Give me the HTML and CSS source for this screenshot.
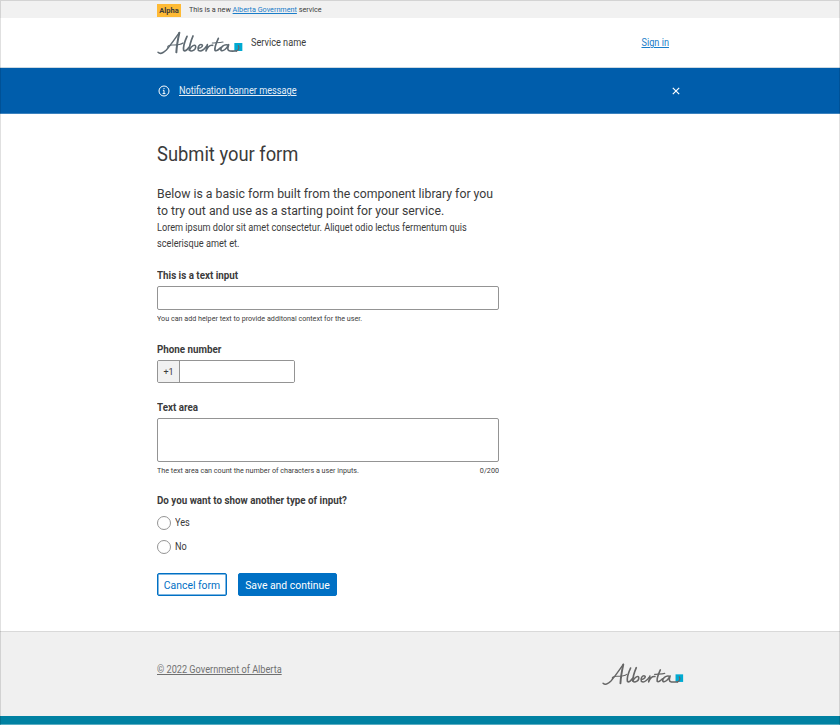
FILE: index.html
```html
<!DOCTYPE html>
<html lang="en">
<head>
<meta charset="utf-8">
<title>Submit your form</title>
<link rel="stylesheet" href="styles.css">
</head>
<body>
<svg class="defs" aria-hidden="true">
  <symbol id="alberta" viewBox="20 18 260 78">
    <rect x="252" y="57" width="24" height="24" fill="#00aad2"/>
    <g fill="none" stroke="currentColor" stroke-linecap="round" stroke-linejoin="round">
      <path stroke-width="4.4" d="M23 85C29 91 39 87 48 78C63 61 75 42 87 26"/>
      <path stroke-width="6" d="M87 26C83 44 79 64 78 85"/>
      <path stroke-width="3.6" d="M53 71C50 66 57 63 66 63C76 63 88 64 98 57"/>
      <path stroke-width="5.2" d="M110 37C104 50 98 68 100 79C104 84 111 77 116 70"/>
      <path stroke-width="5.2" d="M128 36C122 50 117 66 117 78"/>
      <path stroke-width="4.6" d="M117 78C123 85 137 78 136 67C134 60 123 66 119 75"/>
      <path stroke-width="4.6" d="M145 73C154 72 160 64 154 62C147 60 140 71 144 79C151 84 161 77 169 66"/>
      <path stroke-width="4.8" d="M171 62C170 69 168 75 167 81C171 71 178 62 187 64"/>
      <path stroke-width="5" d="M204 43C198 56 192 71 194 79C198 83 205 77 211 71"/>
      <path stroke-width="3.6" d="M186 57C196 56 208 56 218 54"/>
      <path stroke-width="4.8" d="M233 63C221 59 209 71 212 79C218 84 230 73 235 62C232 73 230 80 239 81C247 82 254 81 258 81"/>
      <path stroke-width="4" d="M258 81C264 79 268 72 264 65"/>
    </g>
  </symbol>
</svg>
<div class="page">
  <div class="phase">
    <div class="wrap phase-row">
      <span class="tag">Alpha</span>
      <span class="phase-text">This is a new <a href="#">Alberta Government</a> service</span>
    </div>
  </div>
  <header class="header">
    <div class="wrap header-row">
      <svg class="logo" role="img" aria-label="Alberta"><use href="#alberta"/></svg>
      <span class="service narrow">Service name</span>
      <a class="signin narrow" href="#">Sign in</a>
    </div>
  </header>
  <div class="banner">
    <div class="wrap banner-row">
      <svg class="info" viewBox="0 0 12 12"><circle cx="6" cy="6" r="5"/><path d="M6 3v1.1M4.9 5.3H6v3.1M4.6 8.6h2.8"/></svg>
      <a class="banner-link narrow" href="#">Notification banner message</a>
      <svg class="close" viewBox="0 0 8 8"><path d="M.8.8l6.4 6.4M7.2.8L.8 7.2"/></svg>
    </div>
  </div>
  <main class="main">
    <form class="wrap form">
      <h1 class="narrow">Submit your form</h1>
      <p class="lead narrow">Below is a basic form built from the component library for you<br>to try out and use as a starting point for your service.</p>
      <p class="copy narrow">Lorem ipsum dolor sit amet consectetur. Aliquet odio lectus fermentum quis<br>scelerisque amet et.</p>
      <div class="field">
        <label class="label" for="text">This is a text input</label>
        <input class="box" id="text" type="text">
        <div class="help"><span>You can add helper text to provide additonal context for the user.</span></div>
      </div>
      <div class="field phone">
        <label class="label" for="phone">Phone number</label>
        <div class="box phone-box"><span class="prefix">+1</span><input id="phone" type="tel"></div>
      </div>
      <div class="field area">
        <label class="label" for="area">Text area</label>
        <textarea class="box" id="area"></textarea>
        <div class="help area-help"><span>The text area can count the number of characters a user inputs.</span><span class="count">0/200</span></div>
      </div>
      <div class="field choices">
        <div class="label question">Do you want to show another type of input?</div>
        <label class="radio"><input type="radio" name="more"><span class="narrow">Yes</span></label>
        <label class="radio"><input type="radio" name="more"><span class="narrow">No</span></label>
      </div>
      <div class="actions">
        <button type="button" class="btn"><span>Cancel form</span></button>
        <button type="button" class="btn primary"><span>Save and continue</span></button>
      </div>
    </form>
  </main>
  <footer class="footer">
    <div class="wrap footer-row">
      <a class="narrow" href="#">© 2022 Government of Alberta</a>
      <svg class="logo" role="img" aria-label="Alberta"><use href="#alberta"/></svg>
    </div>
  </footer>
</div>
</body>
</html>
```
FILE: styles.css
```css
* { box-sizing: border-box; }
body { margin: 0; background: #fff; color: #3b3b3b; font: 10px/15.5px Roboto, "Liberation Sans", sans-serif; }
h1, p { margin: 0; font-weight: 400; }
.defs { display: block; width: 0; height: 0; }
.page { height: 725px; display: flex; flex-direction: column; overflow: hidden; }
.page::after { content: ""; position: absolute; inset: 0; border: 1px solid rgba(0, 0, 0, .12); border-bottom-color: rgba(255, 255, 255, .35); pointer-events: none; }
.wrap { width: 526px; margin-left: 157px; }
.narrow { transform: scaleX(.917); transform-origin: left center; }
a { color: #1a7dc9; text-decoration: underline; text-underline-offset: 1px; text-decoration-thickness: 1px; }

.phase { height: 18px; background: #f1f1f1; }
.phase-row { display: flex; align-items: center; gap: 8.4px; padding-top: 3px; }
.tag { width: 24px; height: 13px; background: #feba35; font-size: 7.5px; font-weight: 700; line-height: 13px; text-align: center; }
.phase-text { font-size: 7.5px; line-height: 14px; transform: scaleX(.963); transform-origin: left center; }

.header { height: 50px; border-bottom: 1px solid #ccd9e2; }
.header-row { display: flex; align-items: center; height: 50px; }
.logo { display: block; width: 86.7px; height: 26px; color: #5f6a72; }
.service { margin-left: 7px; }
.signin { margin-left: auto; margin-right: 14px; transform-origin: right center; }

.banner { height: 46px; background: #005dab; border-bottom: 1px solid #3b82be; }
.banner-row { display: flex; align-items: center; height: 46px; }
.info { width: 12px; height: 12px; margin-left: 1px; fill: none; stroke: #fff; stroke-width: 1; }
.banner-link { margin-left: 9.3px; color: #e6eff7; }
.close { width: 8px; height: 8px; margin-left: auto; margin-right: 3px; fill: none; stroke: #fff; stroke-width: 1.2; }

.main { height: 517px; padding-top: 27px; }
.form { width: 342px; }
h1 { font-size: 20px; line-height: 27px; }
.lead { margin-top: 17px; font-size: 13.4px; line-height: 17px; white-space: nowrap; }
.copy { margin-top: 1px; white-space: nowrap; }
.field { margin-top: 17px; }
.label { display: block; font-weight: 700; height: 16px; line-height: 16px; transform: scaleX(.98); transform-origin: left center; }
.box { display: block; width: 100%; height: 24px; margin-top: 3px; padding: 0 6px; border: 1px solid #949494; border-radius: 2px; background: #fff; resize: none; font: inherit; }
#text { margin-top: 2px; }
.help { display: flex; justify-content: space-between; margin-top: 3px; font-size: 7.5px; line-height: 11px; }
.help span { transform: scaleX(.957); transform-origin: left center; white-space: nowrap; }
.help .count { transform-origin: right center; }
.phone-box { display: flex; width: 138px; height: 23px; padding: 0; overflow: hidden; }
.prefix { width: 22px; line-height: 22px; text-align: center; background: #f1f1f1; border-right: 1px solid #949494; font-size: 9px; }
.phone-box input { flex: 1; min-width: 0; border: 0; }
.phone { margin-top: 18px; }
.phone .box { margin-top: 2px; }
.area { margin-top: 16.5px; }
.area textarea { height: 44px; margin-top: 2.5px; }
.choices { margin-top: 17px; }
.radio { display: flex; align-items: center; gap: 4px; height: 14px; margin-top: 10px; }
.question + .radio { margin-top: 6.5px; }
.radio input { appearance: none; width: 14px; height: 14px; margin: 0; border: 1px solid #949494; border-radius: 50%; background: #fff; }
.actions { display: flex; gap: 11px; margin-top: 19.5px; }
.btn { height: 23px; width: 70px; padding: 0; border: 1px solid #0070c4; box-shadow: inset 0 0 0 .5px #0070c4; border-radius: 2px; background: #fff; color: #0070c4; font: 11.3px/21px Roboto, sans-serif; white-space: nowrap; }
.btn span { display: block; margin: 0 -4px; padding-top: 1px; transform: scaleX(.92); }
.primary { width: 99px; background: #0070c4; color: #fff; }

.footer { height: 94px; background: #f0f0f0; border-top: 1px solid #d9d9d9; border-bottom: 9px solid #0081a2; }
.footer-row { display: flex; justify-content: space-between; align-items: flex-start; height: 84px; }
.footer a { margin-top: 30px; color: #707070; }
.footer .logo { width: 82.5px; height: 24.7px; margin: 29.5px -1px 0 0; color: #666; }
```
